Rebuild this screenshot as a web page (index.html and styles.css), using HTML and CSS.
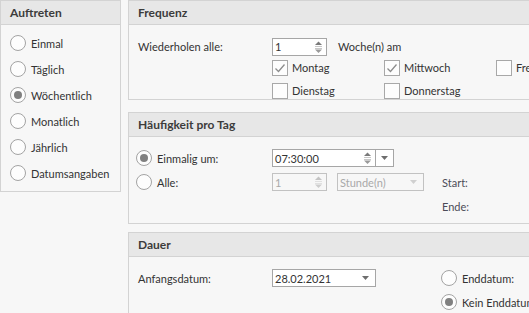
FILE: index.html
```html
<!DOCTYPE html>
<html lang="de">
<head>
<meta charset="utf-8">
<title>Terminserie</title>
<link rel="stylesheet" href="styles.css">
</head>
<body>
<div class="page">
  <section class="panel occ">
    <div class="ph">Auftreten</div>
    <div class="occ-body">
      <div class="rrow"><span class="radio"></span>Einmal</div>
      <div class="rrow"><span class="radio"></span>Täglich</div>
      <div class="rrow"><span class="radio on"></span>Wöchentlich</div>
      <div class="rrow"><span class="radio"></span>Monatlich</div>
      <div class="rrow"><span class="radio"></span>Jährlich</div>
      <div class="rrow"><span class="radio"></span>Datumsangaben</div>
    </div>
  </section>

  <div class="right">
    <section class="panel freq">
      <div class="ph">Frequenz</div>
      <div class="freq-body">
        <div class="cell">Wiederholen alle:</div>
        <div class="cell span3">
          <div class="tb spin">
            <span class="val">1</span>
            <svg class="arrows" width="9" height="14" viewBox="0 0 9 14"><polygon points="1,5 4.5,1.5 8,5" fill="#7a7a7a"/><rect x="1" y="6" width="7" height="1" fill="#c8c8c8"/><rect x="1" y="8" width="7" height="1" fill="#c8c8c8"/><polygon points="1,9.5 4.5,13 8,9.5" fill="#9a9a9a"/></svg>
          </div>
          <span class="after">Woche(n) am</span>
        </div>
        <div class="cell"></div>
        <div class="cell"><span class="cb"><svg width="14" height="14" viewBox="0 0 14 14"><polyline points="2.5,7.5 5.5,10.5 11.5,3.5" fill="none" stroke="#8c8c8c" stroke-width="1.3"/></svg></span>Montag</div>
        <div class="cell"><span class="cb"><svg width="14" height="14" viewBox="0 0 14 14"><polyline points="2.5,7.5 5.5,10.5 11.5,3.5" fill="none" stroke="#8c8c8c" stroke-width="1.3"/></svg></span>Mittwoch</div>
        <div class="cell"><span class="cb"></span>Freitag</div>
        <div class="cell"></div>
        <div class="cell"><span class="cb"></span>Dienstag</div>
        <div class="cell"><span class="cb"></span>Donnerstag</div>
        <div class="cell"></div>
      </div>
    </section>

    <section class="panel perday">
      <div class="ph">Häufigkeit pro Tag</div>
      <div class="perday-body">
        <div class="cell"><span class="radio on"></span>Einmalig um:</div>
        <div class="cell">
          <div class="tb time">
            <span class="val">07:30:00</span>
            <svg class="arrows" width="9" height="14" viewBox="0 0 9 14"><polygon points="1,5 4.5,1.5 8,5" fill="#7a7a7a"/><rect x="1" y="6" width="7" height="1" fill="#c8c8c8"/><rect x="1" y="8" width="7" height="1" fill="#c8c8c8"/><polygon points="1,9.5 4.5,13 8,9.5" fill="#9a9a9a"/></svg>
            <span class="ddbtn"><svg width="7" height="4" viewBox="0 0 7 4"><polygon points="0,0 7,0 3.5,4" fill="#6e6e6e"/></svg></span>
          </div>
        </div>
        <div class="cell"></div>
        <div class="cell"><span class="radio"></span>Alle:</div>
        <div class="cell">
          <div class="tb spin dis">
            <span class="val">1</span>
            <svg class="arrows" width="9" height="14" viewBox="0 0 9 14"><polygon points="1,5 4.5,1.5 8,5" fill="#c4c4c4"/><rect x="1" y="6" width="7" height="1" fill="#e0e0e0"/><rect x="1" y="8" width="7" height="1" fill="#e0e0e0"/><polygon points="1,9.5 4.5,13 8,9.5" fill="#cdcdcd"/></svg>
          </div>
          <div class="tb sel dis">
            <span class="val">Stunde(n)</span>
            <svg class="dd" width="7" height="4" viewBox="0 0 7 4"><polygon points="0,0 7,0 3.5,4" fill="#d0d0d0"/></svg>
          </div>
        </div>
        <div class="cell muted">Start:</div>
        <div class="cell"></div>
        <div class="cell"></div>
        <div class="cell muted">Ende:</div>
      </div>
    </section>

    <section class="panel dauer">
      <div class="ph">Dauer</div>
      <div class="dauer-body">
        <div class="cell">Anfangsdatum:</div>
        <div class="cell">
          <div class="tb date">
            <span class="val">28.02.2021</span>
            <svg class="dd" width="7" height="4" viewBox="0 0 7 4"><polygon points="0,0 7,0 3.5,4" fill="#6e6e6e"/></svg>
          </div>
        </div>
        <div class="cell"><span class="radio"></span>Enddatum:</div>
        <div class="cell"></div>
        <div class="cell"></div>
        <div class="cell"><span class="radio on"></span>Kein Enddatum</div>
      </div>
    </section>
  </div>
</div>
</body>
</html>
```

FILE: styles.css
```css
html, body {
  margin: 0;
  padding: 0;
}
body {
  width: 529px;
  height: 313px;
  overflow: hidden;
  background: #f7f7f7;
  font-family: Lato, "Liberation Sans", sans-serif;
  font-size: 11px;
  color: #333333;
}
.page {
  display: flex;
  align-items: flex-start;
  gap: 7px;
}
.panel {
  box-sizing: border-box;
  border: 1px solid #d3d3d3;
  background: #f7f7f7;
  overflow: hidden;
  flex-shrink: 0;
}
.ph {
  height: 23px;
  border-bottom: 1px solid #d3d3d3;
  background: #e7e7e7;
  padding-left: 9px;
  display: flex;
  align-items: center;
  font-weight: bold;
  font-size: 12px;
  color: #3c3c3c;
}
.occ {
  width: 121px;
  height: 192px;
}
.occ-body {
  padding: 5px 0 0 9px;
}
.rrow {
  height: 26px;
  display: flex;
  align-items: center;
  white-space: nowrap;
}
.radio {
  box-sizing: border-box;
  width: 16px;
  height: 16px;
  border: 1px solid #a3a3a3;
  border-radius: 50%;
  background: #fdfdfd;
  margin-right: 5px;
  display: inline-flex;
  align-items: center;
  justify-content: center;
  flex-shrink: 0;
}
.radio.on::after {
  content: "";
  width: 8px;
  height: 8px;
  border-radius: 50%;
  background: #808080;
}
.right {
  display: flex;
  flex-direction: column;
  width: 440px;
  flex-shrink: 0;
}
.cell {
  display: flex;
  align-items: center;
  white-space: nowrap;
}
.freq {
  height: 100px;
}
.freq-body {
  display: grid;
  grid-template-columns: 134px 112px 112px 112px;
  grid-template-rows: 19px 23px 23px;
  padding: 12px 0 0 9px;
}
.span3 {
  grid-column: span 3;
}
.after {
  margin-left: 11px;
}
.cb {
  box-sizing: border-box;
  width: 16px;
  height: 16px;
  border: 1px solid #a8a8a8;
  background: #fdfdfd;
  margin-right: 4px;
  display: inline-flex;
  align-items: center;
  justify-content: center;
  flex-shrink: 0;
}
.tb {
  box-sizing: border-box;
  height: 18px;
  border: 1px solid #a6a6a6;
  background: #ffffff;
  display: flex;
  align-items: center;
  padding-left: 2px;
  position: relative;
  color: #333;
}
.tb .val {
  flex: 1;
}
.tb .arrows {
  margin-right: 3px;
}
.tb.dis {
  border-color: #c2c2c2;
  background: #f7f7f7;
  color: #a9a9a9;
}
.spin {
  width: 55px;
}
.time {
  width: 122px;
}
.ddbtn {
  box-sizing: border-box;
  width: 18px;
  height: 16px;
  border-left: 1px solid #a6a6a6;
  display: flex;
  align-items: center;
  justify-content: center;
}
.sel {
  width: 87px;
  margin-left: 10px;
}
.dd {
  margin-right: 6px;
}
.date {
  width: 104px;
}
.perday {
  margin-top: 12px;
  height: 112px;
}
.perday-body {
  display: grid;
  grid-template-columns: 136px 170px 100px;
  grid-template-rows: 24px 24px 24px;
  padding: 9px 0 0 7px;
}
.muted {
  color: #4c4c58;
}
.dauer {
  margin-top: 8px;
  height: 120px;
}
.dauer-body {
  display: grid;
  grid-template-columns: 134px 169px 120px;
  grid-template-rows: 24px 24px;
  padding: 9px 0 0 9px;
}
```
